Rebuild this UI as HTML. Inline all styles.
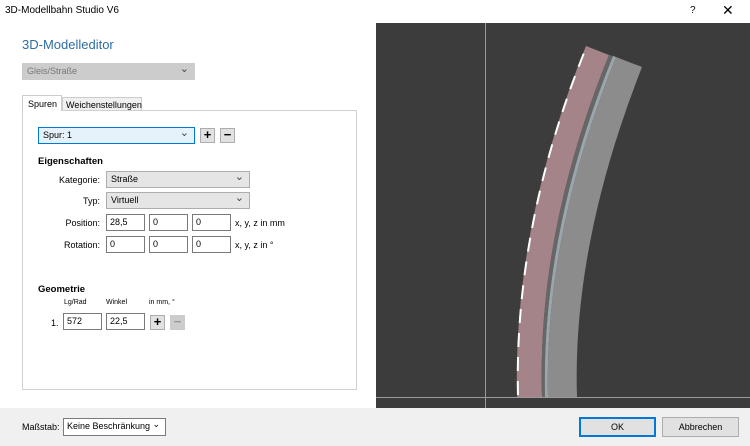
<!DOCTYPE html>
<html><head><meta charset="utf-8"><style>
*{margin:0;padding:0;box-sizing:border-box}
body{width:750px;height:446px;overflow:hidden;background:#fff;font-family:"Liberation Sans",sans-serif;font-size:9px;color:#000;position:relative}
.a{position:absolute}
.inp{position:absolute;background:#fff;border:1px solid #7a7a7a;height:17px;padding:2px 3px;font-size:9px}
.sel{position:absolute;background:#e5e5e5;border:1px solid #adadad;height:17px;padding:2px 4px;font-size:9px}
.sel:after{content:"⌄";position:absolute;right:5px;top:-2px;font-size:11px;color:#444}
.btn{position:absolute;width:15px;height:15px;background:#e1e1e1;border:1px solid #adadad;text-align:center;font-size:13px;line-height:12px;font-weight:bold}
.lbl{position:absolute;text-align:right;font-size:9px}
</style></head><body>
<div class="a" style="left:5px;top:5px;font-size:10px">3D-Modellbahn Studio V6</div>
<div class="a" style="left:690px;top:5px;font-size:10px">?</div>
<div class="a" style="left:722px;top:2px;font-size:14px">✕</div>
<div class="a" style="left:22px;top:37px;font-size:13px;color:#2e6da4">3D-Modelleditor</div>
<div class="sel" style="left:22px;top:63px;width:173px;color:#777;background:#ccc;border-color:#ccc">Gleis/Straße</div>
<div class="a" style="left:22px;top:95px;width:40px;height:16px;border:1px solid #ccc;border-bottom:none;background:#fff;padding:3px 5px;z-index:2">Spuren</div>
<div class="a" style="left:62px;top:97px;width:80px;height:14px;border:1px solid #ccc;background:#f0f0f0;padding:2px 3px">Weichenstellungen</div>
<div class="a" style="left:22px;top:110px;width:335px;height:280px;border:1px solid #d0d0d0"></div>
<div class="sel" style="left:38px;top:127px;width:157px;background:#e5f1fb;border-color:#0078d7">Spur: 1</div>
<div class="btn" style="left:200px;top:128px">+</div>
<div class="btn" style="left:220px;top:128px">−</div>
<div class="a" style="left:38px;top:156px;font-weight:bold;font-size:9.5px">Eigenschaften</div>
<div class="lbl" style="left:40px;width:60px;top:175px">Kategorie:</div>
<div class="sel" style="left:106px;top:171px;width:144px">Straße</div>
<div class="lbl" style="left:40px;width:60px;top:196px">Typ:</div>
<div class="sel" style="left:106px;top:192px;width:144px">Virtuell</div>
<div class="lbl" style="left:40px;width:60px;top:218px">Position:</div>
<div class="inp" style="left:106px;top:214px;width:39px">28,5</div>
<div class="inp" style="left:149px;top:214px;width:39px">0</div>
<div class="inp" style="left:192px;top:214px;width:39px">0</div>
<div class="a" style="left:235px;top:218px">x, y, z in mm</div>
<div class="lbl" style="left:40px;width:60px;top:240px">Rotation:</div>
<div class="inp" style="left:106px;top:236px;width:39px">0</div>
<div class="inp" style="left:149px;top:236px;width:39px">0</div>
<div class="inp" style="left:192px;top:236px;width:39px">0</div>
<div class="a" style="left:235px;top:240px">x, y, z in °</div>
<div class="a" style="left:38px;top:284px;font-weight:bold;font-size:9.5px">Geometrie</div>
<div class="a" style="left:64px;top:299px;font-size:7px">Lg/Rad</div>
<div class="a" style="left:106px;top:299px;font-size:7px">Winkel</div>
<div class="a" style="left:149px;top:299px;font-size:7px">in mm, °</div>
<div class="a" style="left:51px;top:318px">1.</div>
<div class="inp" style="left:63px;top:313px;width:39px">572</div>
<div class="inp" style="left:106px;top:313px;width:39px">22,5</div>
<div class="btn" style="left:150px;top:315px">+</div>
<div class="btn" style="left:170px;top:315px;color:#999;background:#ccc;border-color:#ccc">−</div>
<div class="a" style="left:0;top:408px;width:750px;height:38px;background:#f0f0f0"></div>
<div class="a" style="left:22px;top:422px">Maßstab:</div>
<div class="inp" style="left:63px;top:418px;width:103px;height:18px">Keine Beschränkung <span style="position:absolute;right:5px;top:0">⌄</span></div>
<div class="a" style="left:579px;top:417px;width:77px;height:20px;border:2px solid #0078d7;background:#e1e1e1;text-align:center;line-height:16px">OK</div>
<div class="a" style="left:662px;top:417px;width:77px;height:20px;border:1px solid #adadad;background:#e1e1e1;text-align:center;line-height:18px">Abbrechen</div>
<svg class="a" style="left:0;top:0" width="750" height="446">
<rect x="376" y="23" width="374" height="385" fill="#3c3c3c"/>
<line x1="485.5" y1="23" x2="485.5" y2="408" stroke="#9a9a9a"/>
<line x1="376" y1="397.5" x2="750" y2="397.5" stroke="#9a9a9a"/>
<path d="M517,397 Q513,225 586,46 L609,55 Q537,232 542,397 Z" fill="#a48488"/>
<path d="M542,397 Q537,232 609,55 L613,56 Q541,234 545,397 Z" fill="#666"/>
<path d="M545,397 Q541,234 613,56 L616,57 Q544,236 548,397 Z" fill="#9aa6ac"/>
<path d="M548,397 Q544,236 616,57 L642,67 Q572,245 577,397 Z" fill="#8c8c8c"/>
<path d="M518,395 Q514,225 586,48" fill="none" stroke="#fff" stroke-width="2" stroke-dasharray="14,10"/>
</svg>
</body></html>
